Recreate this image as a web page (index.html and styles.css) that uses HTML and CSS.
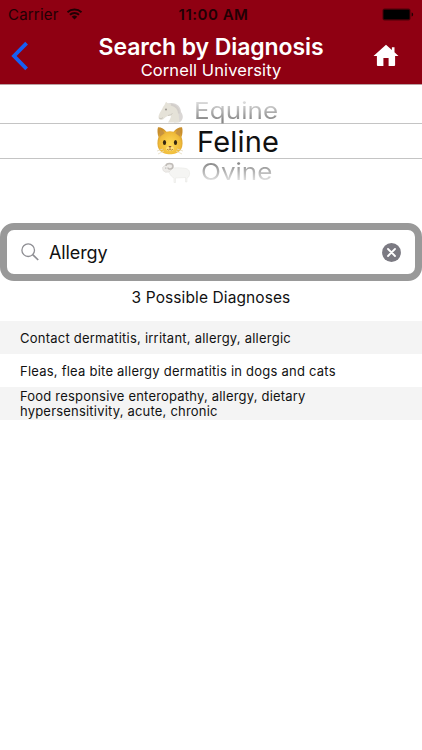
FILE: index.html
```html
<!DOCTYPE html>
<html lang="en">
<head>
    <meta charset="UTF-8">
    <meta name="viewport" content="width=device-width, initial-scale=1.0">
    <title>Search by Diagnosis</title>
    <link rel="stylesheet" href="styles.css">
</head>
<body>
<header class="header">
    <div class="status-bar">
        <div class="carrier">
            <span>Carrier</span>
            <svg class="wifi" width="17" height="12" viewBox="0 0 16 12">
                <path d="M1 4.200a10.300 10.300 0 0 1 14 0M3.400 6.800a6.800 6.800 0 0 1 9.200 0" fill="none" stroke="#210004" stroke-width="1.900"/>
                <path d="M8 11.600 5.200 8.800a4 4 0 0 1 5.600 0z" fill="#210004"/>
            </svg>
        </div>
        <div class="time">11:00 AM</div>
        <div class="battery">
            <svg width="32" height="13" viewBox="0 0 32 13">
                <rect x=".5" y=".5" width="28" height="12" rx="2" fill="#4d0009"/>
                <rect x="1.500" y="1.800" width="26" height="9.400" rx="1" fill="#000"/>
                <path d="M29.600 4.500c2 .4 2 3.600 0 4z" fill="#210004"/>
            </svg>
        </div>
    </div>
    <div class="nav">
        <button class="back" aria-label="Back">
            <svg width="18" height="30" viewBox="0 0 18 30">
                <path d="M15.600 2.200 3 15l12.600 12.800" fill="none" stroke="#155ff5" stroke-width="3.800"/>
            </svg>
        </button>
        <div class="titles">
            <h1>Search by Diagnosis</h1>
            <p>Cornell University</p>
        </div>
        <button class="home" aria-label="Home">
            <svg width="26" height="24" viewBox="0 0 26 24">
                <path d="M13 .8.500 12h3.400v9q0 1 1 1h5.500v-8h5.200v8h5.500q1 0 1-1v-9h3.400l-4-3.700V3.300h-2.600v2.800z" fill="#fff"/>
            </svg>
        </button>
    </div>
</header>

<div class="picker">
    <div class="option equine">
        <svg class="animal" width="27" height="22" viewBox="0 0 27 22">
            <path d="M10 2.500c9-2.500 14 3 14 8.500 3 4 2 8-1 10l-6 .5z" fill="#dad7d5"/>
            <path d="M7.500 4 9 .8 11.500 3c6 0 9 4 10 9l1 9.500H11c1.500-2.500 3-4.500 3-7-3 .3-5 1-7 3-2 2.500-5.500 1.500-5.500-1C1.500 12.500 5 9.500 6 6z" fill="#e5e2d8"/>
            <path d="M14 3.500c5 1.500 8 5 8 9" fill="none" stroke="#d2ceca" stroke-width="2"/>
            <circle cx="9" cy="8.500" r=".9" fill="#918e89"/>
            <path d="M2 17q2 1.500 4-.3M11 14.500q3-.3 4.500-2" fill="none" stroke="#c5c1b9" stroke-width=".8"/>
        </svg>
        <span>Equine</span>
    </div>
    <div class="option feline">
        <svg class="animal" width="28" height="30" viewBox="0 0 28 30">
            <defs>
                <radialGradient id="fur" cx=".5" cy=".62" r=".6">
                    <stop offset="0" stop-color="#ffdb55"/>
                    <stop offset=".7" stop-color="#efba39"/>
                    <stop offset="1" stop-color="#c98e2b"/>
                </radialGradient>
            </defs>
            <path d="M2 1.200C4.500.8 8.500 3 10.500 5.700q3.500-.8 7 0C19.500 3 23.500.8 26 1.200c1 2.800.5 6.800-.5 9.800 1.500 4 1.500 9-.5 12.500-2.500 3.500-7 4.800-11 4.800S5.500 27 3 23.500C1 20 1 15 2.500 11 1.500 8 1 4 2 1.200z" fill="url(#fur)"/>
            <path d="M3.500 3c2 .8 4 2.500 5 4.300L4 10.500zM24.500 3c-2 .8-4 2.500-5 4.300l4.500 3.200z" fill="#c69340"/>
            <ellipse cx="8.500" cy="16.500" rx="1.600" ry="2.600" fill="#352711"/>
            <ellipse cx="19.500" cy="16.500" rx="1.600" ry="2.600" fill="#352711"/>
            <ellipse cx="14" cy="22.500" rx="3.800" ry="2.600" fill="#ffe07b"/>
            <path d="M12.300 20h3.400L14 22z" fill="#8b5138"/>
            <path d="M14 22v1.500m-3-.2q1.500 1.500 3 .2 1.500 1.300 3-.2" fill="none" stroke="#a8742b" stroke-width=".8"/>
            <path d="m1 25 6-2M2 28l6-3M27 25l-6-2M26 28l-6-3" stroke="#e5d9bd" stroke-width=".8"/>
        </svg>
        <span>Feline</span>
    </div>
    <div class="option ovine">
        <svg class="animal" width="30" height="22" viewBox="0 0 30 22">
            <path d="M9 6.500c4-1 11-1 16 0 4 1 4 5 3 8l-2 1.500V20h-1.500v-4.500l-10 .5v4.500H13V16c-4-2-5-6-6-8z" fill="#f5f5f3" stroke="#e9e9e6" stroke-width=".6"/>
            <path d="m1.500 5.500 3.500-3 5-.5L12 6l-4 4-3.500.2-2.500-1.700z" fill="#eeece9" stroke="#dbd8d5" stroke-width=".6"/>
            <path d="M5 4c0-3.500 7-3.500 7 0s-5 4-5 1.500" fill="none" stroke="#c0bcb8" stroke-width="1.500"/>
            <circle cx="4.800" cy="6" r=".6" fill="#999"/>
        </svg>
        <span>Ovine</span>
    </div>
</div>

<div class="search-box">
    <svg class="magnifier" width="18" height="18" viewBox="0 0 18 18">
        <circle cx="7.200" cy="7.200" r="6.300" fill="none" stroke="#8e8e93" stroke-width="1.300"/>
        <path d="m11.700 11.700 5.500 5.300" stroke="#8e8e93" stroke-width="1.700"/>
    </svg>
    <div class="query">Allergy</div>
    <button class="clear" aria-label="Clear">
        <svg width="19" height="19" viewBox="0 0 19 19">
            <circle cx="9.500" cy="9.500" r="9.400" fill="#7b7a82"/>
            <path d="m6 6 7 7m0-7-7 7" stroke="#fff" stroke-width="1.800" stroke-linecap="round"/>
        </svg>
    </button>
</div>

<div class="count">3 Possible Diagnoses</div>

<div class="results">
    <div class="result">Contact dermatitis, irritant, allergy, allergic</div>
    <div class="result">Fleas, flea bite allergy dermatitis in dogs and cats</div>
    <div class="result">Food responsive enteropathy, allergy, dietary<br>hypersensitivity, acute, chronic</div>
</div>
</body>
</html>
```
FILE: styles.css
```css
* {
    box-sizing: border-box;
}

body {
    font-family: Inter, "Liberation Sans", sans-serif;
    margin: 0;
    background-color: #fff;
    color: #111;
}

button {
    padding: 0;
    border: none;
    background: none;
    display: flex;
}

.header {
    height: 85px;
    background-color: #8f0012;
    border-bottom: 1px solid #b9a0a2;
}

.status-bar {
    display: grid;
    grid-template-columns: 1fr 1fr 1fr;
    align-items: center;
    height: 28px;
    padding: 0 8px;
    font-size: 15px;
    color: #210004;
}

.carrier {
    display: flex;
    align-items: center;
    gap: 7px;
    letter-spacing: 0.2px;
}

.time {
    text-align: center;
    font-weight: 600;
    font-size: 15px;
    letter-spacing: 0.5px;
    padding-left: 5px;
}

.battery {
    display: flex;
    justify-content: flex-end;
}

.nav {
    display: grid;
    grid-template-columns: 60px 1fr 60px;
    align-items: center;
    height: 56px;
}

.back {
    padding-left: 11px;
}

.home {
    padding-left: 11px;
}

.titles {
    text-align: center;
    color: #fff;
}

.titles h1 {
    margin: 2px 0 0;
    font-size: 23px;
    line-height: 26px;
    font-weight: 600;
    letter-spacing: -0.1px;
}

.titles p {
    margin: 0;
    font-size: 16.5px;
    line-height: 20px;
    letter-spacing: 0.1px;
}

.picker {
    height: 138px;
}

.option {
    display: flex;
    align-items: center;
}

.option span {
    line-height: 34px;
    white-space: nowrap;
}

.option.equine {
    height: 38px;
    padding-left: 157px;
}

.equine span {
    margin-left: 10px;
    font-size: 26px;
    letter-spacing: 0.1px;
    transform: translateY(7px) scaleY(0.9);
    background: linear-gradient(#ddd 20%, #888 80%);
    -webkit-background-clip: text;
    color: transparent;
}

.equine .animal {
    margin-top: 15px;
}

.option.feline {
    height: 36px;
    padding-left: 156px;
    border-top: 1px solid #c4c4c4;
    border-bottom: 1px solid #c4c4c4;
}

.feline span {
    margin-left: 13px;
    padding-top: 1px;
    font-size: 29px;
    letter-spacing: 0.2px;
}

.option.ovine {
    height: 27px;
    padding-left: 161px;
}

.ovine span {
    margin-left: 10px;
    font-size: 26px;
    transform: translateY(-1px) scaleY(0.9);
    background: linear-gradient(#888 20%, #e4e4e4 80%);
    -webkit-background-clip: text;
    color: transparent;
}

.search-box {
    display: flex;
    align-items: center;
    height: 58px;
    padding: 0 14px;
    border: 7px solid #999;
    border-radius: 14px;
}

.query {
    flex: 1;
    margin-left: 10px;
    font-size: 18px;
    letter-spacing: -0.1px;
}

.count {
    padding-top: 7px;
    height: 40px;
    text-align: center;
    font-size: 15.5px;
    line-height: 20px;
    letter-spacing: 0.1px;
}

.result {
    display: flex;
    align-items: center;
    height: 33px;
    padding: 1px 0 0 20px;
    font-size: 13px;
    line-height: 15px;
    letter-spacing: 0.23px;
}

.result:nth-child(odd) {
    background-color: #f4f4f4;
}

.result:last-child {
    letter-spacing: 0.2px;
}
```
